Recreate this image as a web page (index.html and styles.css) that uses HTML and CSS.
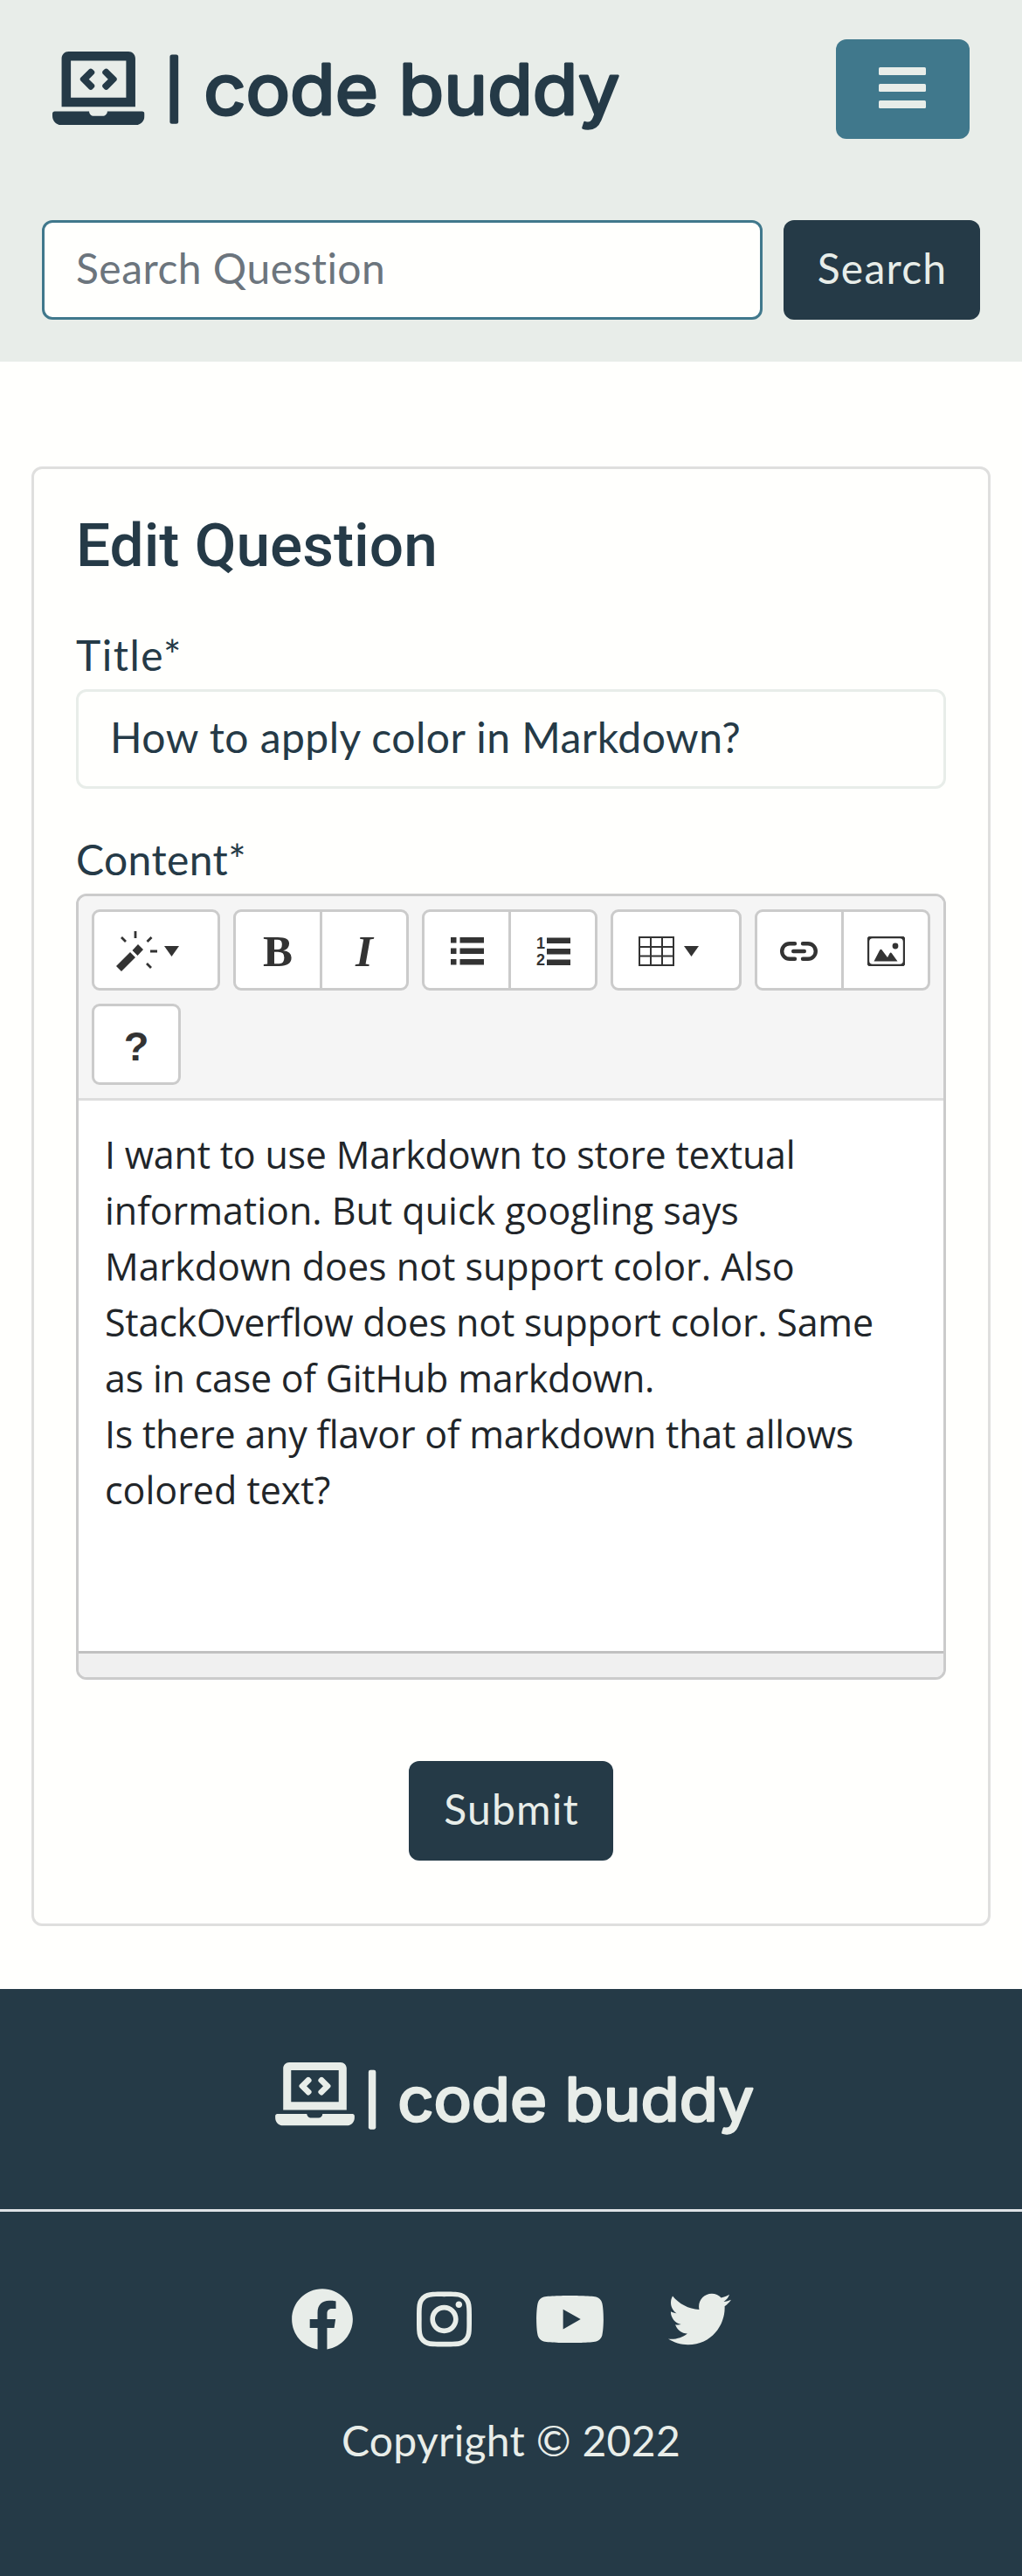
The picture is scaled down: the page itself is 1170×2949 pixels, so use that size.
FILE: index.html
```html
<!DOCTYPE html>
<html lang="en">
<head>
<meta charset="utf-8">
<title>Code Buddy - Edit Question</title>
<link rel="stylesheet" href="styles.css">
</head>
<body>
<svg class="sprite" aria-hidden="true">
  <symbol id="laptop" viewBox="0 0 640 512"><path d="M255.03 261.65c6.25 6.25 16.38 6.25 22.63 0l11.31-11.31c6.25-6.25 6.25-16.38 0-22.63L253.25 192l35.71-35.72c6.25-6.25 6.25-16.38 0-22.63l-11.31-11.31c-6.25-6.25-16.38-6.25-22.63 0l-58.34 58.34c-6.25 6.25-6.25 16.38 0 22.63l58.35 58.34zm96.01-11.3l11.31 11.31c6.25 6.25 16.38 6.25 22.63 0l58.34-58.34c6.25-6.25 6.25-16.38 0-22.63l-58.34-58.34c-6.25-6.25-16.38-6.25-22.63 0l-11.31 11.31c-6.25 6.25-6.25 16.38 0 22.63L386.75 192l-35.71 35.72c-6.25 6.25-6.25 16.38 0 22.63zM624 416H381.54c-.74 19.81-14.71 32-32.74 32H288c-18.69 0-33.02-17.47-32.77-32H16c-8.8 0-16 7.2-16 16v16c0 35.2 28.8 64 64 64h512c35.2 0 64-28.8 64-64v-16c0-8.8-7.2-16-16-16zM576 48c0-26.4-21.6-48-48-48H112C85.6 0 64 21.6 64 48v336h512V48zm-64 272H128V64h384v256z"/></symbol>
</svg>

<header class="header">
  <div class="topbar">
    <a class="brand">
      <svg class="brand-icon"><use href="#laptop"/></svg>
      <svg class="wordmark" viewBox="0 0 524 114"><text class="bar" x="-2" y="80">|</text><text class="name" x="40" y="86" transform="scale(1.055 1)">code buddy</text></svg>
    </a>
    <button class="menu" aria-label="Menu"><svg width="54" height="48" viewBox="0 0 54 48"><rect width="54" height="9" y="0" rx="1.5"/><rect width="54" height="9" y="19" rx="1.5"/><rect width="54" height="9" y="38" rx="1.5"/></svg></button>
  </div>
  <form class="search">
    <input class="field search-field" placeholder="Search Question">
    <button class="btn" type="button">Search</button>
  </form>
</header>

<main class="main">
  <form class="card">
    <h1 class="heading">Edit Question</h1>
    <label class="label label-title">Title*</label>
    <input class="field title-field" value="How to apply color in Markdown?">
    <label class="label label-content">Content*</label>
    <div class="editor">
      <div class="toolbar">
        <div class="group"><button type="button" class="tool drop">
          <svg width="48" height="46" viewBox="0 0 48 46"><path d="M0 40 16 24l6 6L6 46zM18.500 22l6.500-7 6 6-6.500 7z"/><path class="ray" d="M6 7l5 5M22 0v8M40.500 7l-5 5M39 23h8M35 37l5 5"/></svg>
          <svg class="caret" width="17" height="12" viewBox="0 0 17 12"><path d="M0 0h17L8.500 12z"/></svg>
        </button></div>
        <div class="group"><button type="button" class="tool bold">B</button><button type="button" class="tool italic">I</button></div>
        <div class="group">
          <button type="button" class="tool list"><svg width="38" height="32" viewBox="0 0 38 32"><path d="M0 0h6.500v6.500H0zM10.500 0H38v6.500H10.500zM0 12.500h6.500V19H0zM10.500 12.500H38V19H10.500zM0 25h6.500v6.500H0zM10.500 25H38v6.500H10.500z"/></svg></button>
          <button type="button" class="tool list"><svg width="44" height="50" viewBox="-2 -8 44 50"><path d="M12 1.500h27V8H12zM12 14h27v6.500H12zM12 26.500h27V33H12z"/><text class="num" x="0" y="14">1</text><text class="num" x="0" y="33">2</text></svg></button>
        </div>
        <div class="group"><button type="button" class="tool drop table">
          <svg width="41" height="34" viewBox="0 0 41 34"><path class="grid" d="M1 1h39v32H1zM1 12h39M1 22.500h39M14 1v32M27 1v32"/></svg>
          <svg class="caret" width="17" height="12" viewBox="0 0 17 12"><path d="M0 0h17L8.500 12z"/></svg>
        </button></div>
        <div class="group">
          <button type="button" class="tool link"><svg width="43" height="22" viewBox="0 0 43 22"><path class="chain" d="M17 2.200h-6a8.800 8.800 0 0 0 0 17.600h6M26 2.200h6a8.800 8.800 0 0 1 0 17.600h-6M15.200 11h12.600"/></svg></button>
          <button type="button" class="tool"><svg width="43" height="34" viewBox="0 0 43 34"><path fill-rule="evenodd" d="M1.500 0h40L43 1.500v31L41.500 34h-40L0 32.500v-31zM6 2.200Q2.200 2.200 2.200 6v22q0 3.800 3.800 3.800h31q3.800 0 3.800-3.800V6q0-3.800-3.800-3.800z"/><path d="M7.500 28.500 14 16q1.500-2.500 3 0l6 8 2.500-4.500q1.200-1.800 2.500 0l6.500 9z"/><circle cx="32" cy="11" r="3.400"/></svg></button>
        </div>
        <div class="group"><button type="button" class="tool help">?</button></div>
      </div>
      <div class="editable"><span class="tight">I want to use Markdown to store textual</span><br>information. But quick googling says<br>Markdown does not support color. Also<br><span class="tight">StackOverflow does not support color. Same<br>as in case of GitHub markdown.<br>Is there any flavor of markdown that allows</span><br>colored text?</div>
      <div class="statusbar"></div>
    </div>
    <button class="btn submit" type="button">Submit</button>
  </form>
</main>

<footer class="footer">
  <div class="footer-brand">
    <svg class="brand-icon"><use href="#laptop"/></svg>
    <svg class="wordmark" viewBox="0 0 524 114"><text class="bar" x="-2" y="80">|</text><text class="name" x="40" y="86" transform="scale(1.055 1)">code buddy</text></svg>
  </div>
  <div class="social">
    <svg width="72" height="72" viewBox="0 0 512 512"><path d="M504 256C504 119 393 8 256 8S8 119 8 256c0 123.780 90.690 226.380 209.250 245V327.690h-63V256h63v-54.640c0-62.150 37-96.480 93.670-96.480 27.140 0 55.520 4.840 55.520 4.840v61h-31.280c-30.800 0-40.410 19.120-40.410 38.730V256h68.780l-11 71.690h-57.780V501C413.310 482.380 504 379.780 504 256z"/></svg>
    <svg width="63" height="72" viewBox="0 0 448 512"><path d="M224.100 141c-63.600 0-114.900 51.300-114.900 114.900s51.300 114.900 114.900 114.900S339 319.500 339 255.900 287.700 141 224.100 141zm0 189.600c-41.100 0-74.700-33.500-74.700-74.700s33.500-74.700 74.700-74.700 74.700 33.500 74.700 74.700-33.600 74.700-74.700 74.700zm146.400-194.300c0 14.900-12 26.800-26.800 26.800-14.900 0-26.800-12-26.800-26.800s12-26.800 26.800-26.800 26.800 12 26.800 26.800zm76.100 27.200c-1.700-35.900-9.900-67.700-36.200-93.900-26.200-26.200-58-34.400-93.900-36.200-37-2.100-147.900-2.100-184.900 0-35.800 1.700-67.600 9.900-93.900 36.100s-34.400 58-36.200 93.900c-2.100 37-2.100 147.900 0 184.900 1.700 35.900 9.900 67.700 36.200 93.900s58 34.400 93.900 36.200c37 2.100 147.900 2.100 184.900 0 35.900-1.700 67.700-9.900 93.900-36.200 26.200-26.200 34.400-58 36.200-93.900 2.100-37 2.100-147.800 0-184.800zM398.800 388c-7.800 19.600-22.900 34.700-42.600 42.600-29.500 11.700-99.500 9-132.100 9s-102.700 2.600-132.100-9c-19.600-7.800-34.700-22.900-42.600-42.600-11.700-29.500-9-99.500-9-132.100s-2.600-102.700 9-132.100c7.800-19.600 22.900-34.700 42.600-42.600 29.500-11.700 99.500-9 132.100-9s102.700-2.600 132.100 9c19.600 7.800 34.700 22.900 42.600 42.600 11.700 29.500 9 99.500 9 132.100s2.700 102.700-9 132.100z"/></svg>
    <svg width="81" height="72" viewBox="0 0 576 512"><path d="M549.655 124.083c-6.281-23.650-24.787-42.276-48.284-48.597C458.781 64 288 64 288 64S117.220 64 74.629 75.486c-23.497 6.322-42.003 24.947-48.284 48.597-11.412 42.867-11.412 132.305-11.412 132.305s0 89.438 11.412 132.305c6.281 23.650 24.787 41.500 48.284 47.821C117.220 448 288 448 288 448s170.780 0 213.371-11.486c23.497-6.321 42.003-24.171 48.284-47.821 11.412-42.867 11.412-132.305 11.412-132.305s0-89.438-11.412-132.305zm-317.510 213.508V175.185l142.739 81.205-142.739 81.201z"/></svg>
    <svg width="72" height="72" viewBox="0 0 512 512"><path d="M459.370 151.716c.325 4.548.325 9.097.325 13.645 0 138.720-105.583 298.558-298.558 298.558-59.452 0-114.680-17.219-161.137-47.106 8.447.974 16.568 1.299 25.340 1.299 49.055 0 94.213-16.568 130.274-44.832-46.132-.975-84.792-31.188-98.112-72.772 6.498.974 12.995 1.624 19.818 1.624 9.421 0 18.843-1.300 27.614-3.573-48.081-9.747-84.143-51.980-84.143-102.985v-1.299c13.969 7.797 30.214 12.670 47.431 13.319-28.264-18.843-46.781-51.005-46.781-87.391 0-19.492 5.197-37.360 14.294-52.954 51.655 63.675 129.300 105.258 216.365 109.807-1.624-7.797-2.599-15.918-2.599-24.040 0-57.828 46.782-104.934 104.934-104.934 30.213 0 57.502 12.670 76.670 33.137 23.715-4.548 46.456-13.320 66.599-25.340-7.798 24.366-24.366 44.833-46.132 57.827 21.117-2.273 41.584-8.122 60.426-16.243-14.292 20.791-32.161 39.308-52.628 54.253z"/></svg>
  </div>
  <p class="copyright">Copyright © 2022</p>
</footer>
</body>
</html>
```
FILE: styles.css
```css
* { box-sizing: border-box; }

body {
  margin: 0;
  background: #fffffd;
  color: #253a47;
  font-family: Lato, "Liberation Sans", sans-serif;
  font-size: 48px;
  line-height: 72px;
}

.sprite { display: none; }
svg { fill: currentColor; display: block; flex: none; }
button { font: inherit; margin: 0; border: 0; }

.header {
  height: 414px;
  background: #e8ede9;
  padding: 45px 48px 48px;
}
.topbar {
  display: flex;
  justify-content: space-between;
  height: 114px;
  padding: 0 12px;
}
.brand { display: flex; gap: 25px; }
.brand-icon { width: 105.500px; height: 84.400px; margin-top: 13.500px; }
.wordmark { width: 524px; height: 114px; overflow: visible; }
.wordmark text {
  font-family: Inter, sans-serif;
  stroke: currentColor;
  stroke-width: 3px;
  stroke-linejoin: round;
}
.wordmark .name { font-size: 80px; letter-spacing: 0; }
.wordmark .bar { font-size: 62px; stroke-width: 5px; }

.menu {
  width: 153px;
  height: 114px;
  padding: 0 1px 3px 0;
  border-radius: 12px;
  background: #40788c;
  color: #e8ede9;
  display: grid;
  place-items: center;
}

.search { display: flex; gap: 24px; margin-top: 93px; }
.field {
  display: block;
  height: 114px;
  border: 3px solid #e8ede9;
  border-radius: 12px;
  padding: 0 36px 5px;
  background: #fffffd;
  color: #253a47;
  font: inherit;
  letter-spacing: 0.470px;
}
.search-field { flex: 1; min-width: 0; border-color: #40788c; }
.search-field::placeholder { color: #6c757d; opacity: 1; }
.btn {
  width: 225px;
  height: 114px;
  padding: 0 0 5px 1px;
  border-radius: 12px;
  background: #253a47;
  color: #e8ede9;
  letter-spacing: 1.200px;
}

.main { padding: 120px 36px 72px; }
.card {
  height: 1671px;
  padding: 46px 48px 0;
  border: 3px solid #dfdfde;
  border-radius: 12px;
}
.heading {
  margin: 0 0 48px;
  font: 500 69.400px/83px Roboto, sans-serif;
}
.label { display: block; height: 75px; }
.label-title { letter-spacing: 1.500px; }
.label-content { letter-spacing: 0.400px; margin-top: 45px; }
.title-field { width: 100%; }

.editor {
  height: 900px;
  border: 3px solid #cbcbcb;
  border-radius: 12px;
  overflow: hidden;
  background: #fff;
}
.toolbar {
  display: flex;
  flex-wrap: wrap;
  align-content: flex-start;
  gap: 15px;
  height: 234px;
  padding: 15px 12px 0 15px;
  border-bottom: 3px solid #ddd;
  background: #f5f5f5;
}
.group { display: flex; }
.tool {
  width: 102px;
  height: 93px;
  padding: 3px 0 0;
  border: 3px solid #cbcbcb;
  border-radius: 9px;
  background: #fff;
  color: #333;
  display: flex;
  align-items: center;
  justify-content: center;
}
.tool + .tool { margin-left: -3px; border-radius: 0 9px 9px 0; }
.tool:has(+ .tool) { border-radius: 9px 0 0 9px; }
.drop { width: 147px; justify-content: flex-start; gap: 7px; padding-left: 25px; }
.table { width: 150px; gap: 11px; padding-left: 29px; }
.list { padding-left: 2px; }
.link { padding-right: 2px; }
.ray { stroke: currentColor; stroke-width: 2.800px; }
.grid { fill: none; stroke: currentColor; stroke-width: 2px; }
.chain { fill: none; stroke: currentColor; stroke-width: 4.400px; stroke-linecap: round; }
.bold, .italic { font: bold 51px/1 "Liberation Serif", serif; }
.italic { font-style: italic; }
.help { font: bold 47px/1 "Liberation Sans", sans-serif; }
.num { font: bold 18px "Liberation Sans", sans-serif; }

.editable {
  height: 630px;
  padding: 30px 30px 0;
  color: #212529;
  font: 43px/64px "Open Sans", sans-serif;
  white-space: nowrap;
}
.tight { letter-spacing: -0.220px; }
.statusbar { height: 30px; border-top: 3px solid #c1c1c1; background: #f0f0f0; }

.submit { display: block; width: 234px; margin: 93px auto 0; }

.footer {
  height: 672px;
  background: #253a47;
  color: #e8ede9;
}
.footer-brand {
  display: flex;
  gap: 12.500px;
  height: 255px;
  padding: 77px 0 0 315px;
  border-bottom: 3px solid #dee2e6;
}
.footer-brand .brand-icon { width: 91px; height: 72.600px; margin-top: 7px; }
.footer-brand .wordmark { width: 449px; height: 97.700px; }
.social {
  display: flex;
  justify-content: center;
  gap: 72px;
  padding-top: 87px;
}
.copyright { margin: 67px 0 0; text-align: center; letter-spacing: 0.300px; }
```
